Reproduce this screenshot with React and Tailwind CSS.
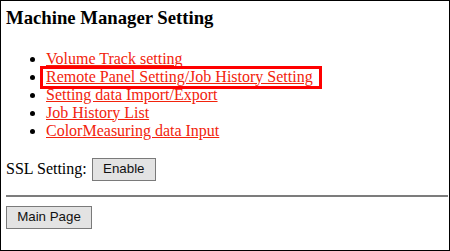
export default function App() {
  const links = [
    "Volume Track setting",
    "Remote Panel Setting/Job History Setting",
    "Setting data Import/Export",
    "Job History List",
    "ColorMeasuring data Input",
  ];
  return (
    <div
      className="relative w-[450px] h-[251px] border border-black bg-white pl-[5px] pr-[1px] pt-[6px] text-black"
      style={{ fontFamily: '"Liberation Serif", "Times New Roman", serif' }}
    >
      <h3 className="text-[18.72px] font-bold leading-[21.5px] mb-[21px]">Machine Manager Setting</h3>
      <ul className="list-disc pl-10 text-[16px] leading-[18px]">
        {links.map((l) => (
          <li key={l}>
            <a href="#" className="underline text-[#f2230c]">
              {l}
            </a>
          </li>
        ))}
      </ul>
      <div className="flex items-center mt-[18px] text-[16px] leading-[18px]">
        <span>SSL Setting:</span>
        <button
          className="ml-[5px] w-[64px] h-[23px] bg-[#e3e3e3] border border-[#7a7a7a] text-[13.33px] text-[#111] flex items-center justify-center"
          style={{ fontFamily: '"Liberation Sans", Arial, sans-serif' }}
        >
          Enable
        </button>
      </div>
      <div className="mt-[14px] border-t-2 border-[#7c7c7c]" />
      <button
        className="mt-[9px] w-[86px] h-[23px] bg-[#e3e3e3] border border-[#7a7a7a] text-[13.33px] text-[#111] flex items-center justify-center"
        style={{ fontFamily: '"Liberation Sans", Arial, sans-serif' }}
      >
        Main Page
      </button>
      <div className="absolute left-[39px] top-[65px] w-[282px] h-[23px] border-[3px] border-[#ff0000] pointer-events-none" />
    </div>
  );
}
